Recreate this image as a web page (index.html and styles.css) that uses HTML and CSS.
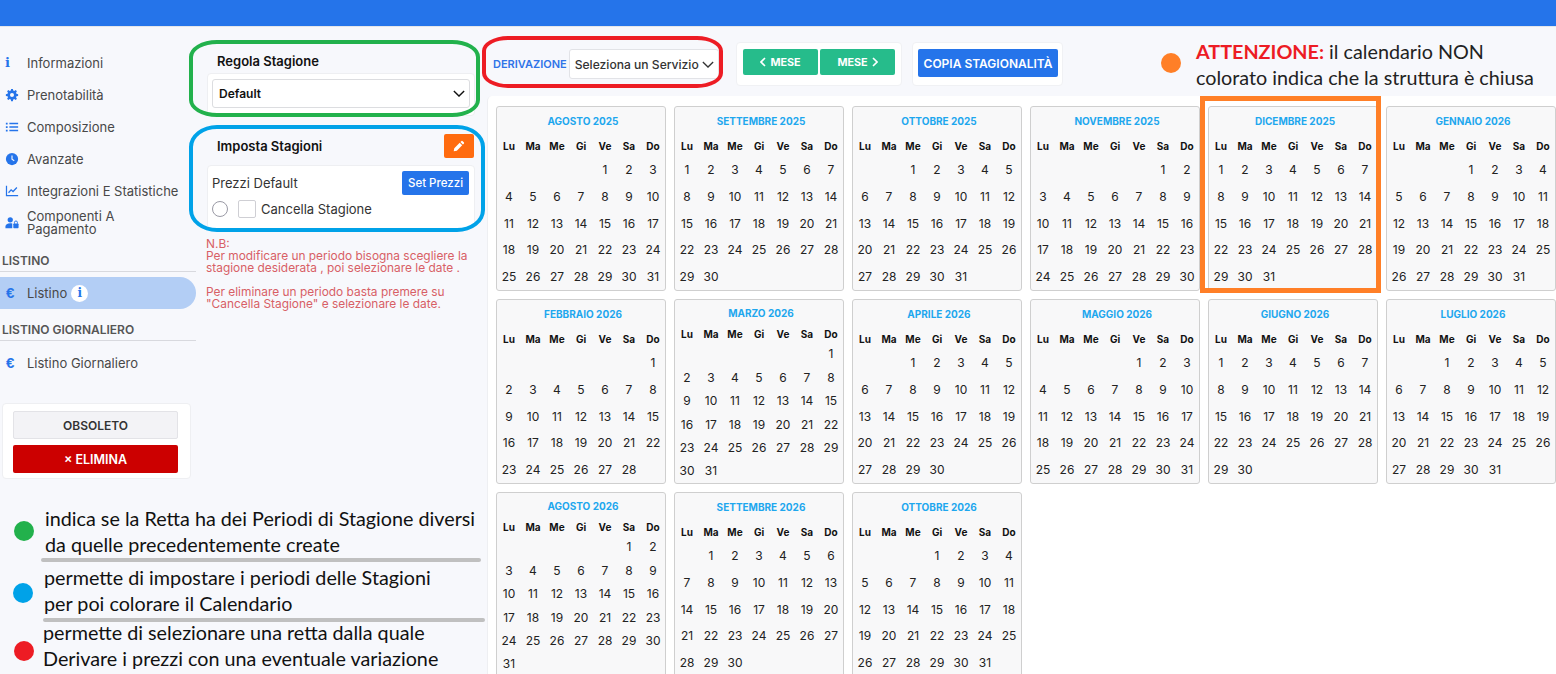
FILE: index.html
```html
<!DOCTYPE html>
<html lang="it">
<head>
<meta charset="utf-8">
<title>Listino</title>
<link rel="stylesheet" href="styles.css">
</head>
<body>
<header class="topbar"></header>
<div class="app">
  <nav class="sidebar">
    <a class="nav-item"><span class="ico ico-i">i</span><span>Informazioni</span></a>
    <a class="nav-item"><svg class="ico" viewBox="0 0 16 16"><path fill="#2574ea" d="M7 1h2l.4 1.8 1.2.5 1.6-1 1.4 1.4-1 1.6.5 1.2L15 7v2l-1.9.4-.5 1.2 1 1.6-1.4 1.4-1.6-1-1.2.5L9 15H7l-.4-1.9-1.2-.5-1.6 1-1.4-1.4 1-1.6-.5-1.2L1 9V7l1.9-.4.5-1.2-1-1.6 1.4-1.4 1.6 1 1.2-.5zM8 5.7a2.3 2.3 0 1 0 0 4.6 2.3 2.3 0 0 0 0-4.6z"/></svg><span>Prenotabilità</span></a>
    <a class="nav-item"><svg class="ico" viewBox="0 0 16 16"><path fill="#2574ea" d="M1 3h2v2H1zM1 7h2v2H1zM1 11h2v2H1zM5 3.2h10v1.6H5zM5 7.2h10v1.6H5zM5 11.2h10v1.6H5z"/></svg><span>Composizione</span></a>
    <a class="nav-item"><svg class="ico" viewBox="0 0 16 16"><circle cx="8" cy="8" r="7" fill="#2574ea"/><path d="M8 4v4.3l2.6 1.6" fill="none" stroke="#f7f8fc" stroke-width="1.3"/></svg><span>Avanzate</span></a>
    <a class="nav-item"><svg class="ico" viewBox="0 0 16 16"><path fill="none" stroke="#2574ea" stroke-width="1.4" d="M1.7 2v11.3H15"/><path fill="none" stroke="#2574ea" stroke-width="1.4" d="M4 10l3-3.4 2.2 2L13.6 4"/></svg><span>Integrazioni E Statistiche</span></a>
    <a class="nav-item"><svg class="ico" viewBox="0 0 16 16"><circle cx="6" cy="4.4" r="3" fill="#2574ea"/><path fill="#2574ea" d="M0.5 14v-2c0-2.300 2-3.800 5.500-3.800 1 0 1.700.1 2.300.3V14z"/><rect x="9.500" y="8.500" width="6" height="5.500" rx=".8" fill="#2574ea"/><path d="M10.800 8.800V7.400a1.700 1.700 0 0 1 3.400 0v1.400" fill="none" stroke="#2574ea" stroke-width="1.100"/></svg><span class="nav-wrap">Componenti A Pagamento</span></a>
    <h3 class="nav-title">LISTINO</h3>
    <a class="nav-item active"><span class="ico ico-e">€</span><span>Listino</span><span class="info-badge">i</span></a>
    <h3 class="nav-title second">LISTINO GIORNALIERO</h3>
    <a class="nav-item"><span class="ico ico-e">€</span><span>Listino Giornaliero</span></a>
    <div class="danger-card">
      <button class="btn-obsolete">OBSOLETO</button>
      <button class="btn-delete">× ELIMINA</button>
    </div>
  </nav>

  <aside class="rules">
    <h4 class="rule-title">Regola Stagione</h4>
    <div class="card rule-card">
      <div class="select-default">Default<svg class="chev" viewBox="0 0 14 8"><path d="M1 1l6 6 6-6" fill="none" stroke="#111" stroke-width="1.600"/></svg></div>
    </div>
    <div class="rule-head">
      <h4 class="rule-title">Imposta Stagioni</h4>
      <button class="btn-edit"><svg viewBox="0 0 12 12"><path fill="#fff" d="M8.300 1.200a1 1 0 0 1 1.400 0l1.100 1.100a1 1 0 0 1 0 1.400l-.9.900-2.500-2.500zM6.700 2.800l2.500 2.500-5.400 5.400-3.100.6.600-3.100z"/></svg></button>
    </div>
    <div class="card season-card">
      <div class="season-row">
        <span>Prezzi Default</span>
        <button class="btn-set">Set Prezzi</button>
      </div>
      <div class="season-row2">
        <span class="radio"></span>
        <span class="check"></span>
        <span>Cancella Stagione</span>
      </div>
    </div>
    <p class="note">N.B:<br>Per modificare un periodo bisogna scegliere la stagione desiderata , poi selezionare le date .<br><br>Per eliminare un periodo basta premere su "Cancella Stagione" e selezionare le date.</p>
  </aside>

  <main class="main">
    <div class="toolbar">
      <div class="tool derive">
        <span class="derive-label">DERIVAZIONE</span>
        <div class="select-service">Seleziona un Servizio<svg class="chev small" viewBox="0 0 14 8"><path d="M1 1l6 6 6-6" fill="none" stroke="#333" stroke-width="1.500"/></svg></div>
      </div>
      <div class="tool nav-tool">
        <button class="btn-month"><svg class="arrow" viewBox="0 0 6 10"><path d="M5 1L1 5l4 4" fill="none" stroke="#fff" stroke-width="1.600"/></svg>MESE</button>
        <button class="btn-month">MESE<svg class="arrow" viewBox="0 0 6 10"><path d="M1 1l4 4-4 4" fill="none" stroke="#fff" stroke-width="1.600"/></svg></button>
      </div>
      <div class="tool copy-tool">
        <button class="btn-copy">COPIA STAGIONALITÀ</button>
      </div>
    </div>
    <section class="panel">
      <div class="months">
        <article class="month"><h5>AGOSTO 2025</h5><div class="days"><b>Lu</b><b>Ma</b><b>Me</b><b>Gi</b><b>Ve</b><b>Sa</b><b>Do</b><span class="s5">1</span><span>2</span><span>3</span><span>4</span><span>5</span><span>6</span><span>7</span><span>8</span><span>9</span><span>10</span><span>11</span><span>12</span><span>13</span><span>14</span><span>15</span><span>16</span><span>17</span><span>18</span><span>19</span><span>20</span><span>21</span><span>22</span><span>23</span><span>24</span><span>25</span><span>26</span><span>27</span><span>28</span><span>29</span><span>30</span><span>31</span></div></article>
        <article class="month"><h5>SETTEMBRE 2025</h5><div class="days"><b>Lu</b><b>Ma</b><b>Me</b><b>Gi</b><b>Ve</b><b>Sa</b><b>Do</b><span>1</span><span>2</span><span>3</span><span>4</span><span>5</span><span>6</span><span>7</span><span>8</span><span>9</span><span>10</span><span>11</span><span>12</span><span>13</span><span>14</span><span>15</span><span>16</span><span>17</span><span>18</span><span>19</span><span>20</span><span>21</span><span>22</span><span>23</span><span>24</span><span>25</span><span>26</span><span>27</span><span>28</span><span>29</span><span>30</span></div></article>
        <article class="month"><h5>OTTOBRE 2025</h5><div class="days"><b>Lu</b><b>Ma</b><b>Me</b><b>Gi</b><b>Ve</b><b>Sa</b><b>Do</b><span class="s3">1</span><span>2</span><span>3</span><span>4</span><span>5</span><span>6</span><span>7</span><span>8</span><span>9</span><span>10</span><span>11</span><span>12</span><span>13</span><span>14</span><span>15</span><span>16</span><span>17</span><span>18</span><span>19</span><span>20</span><span>21</span><span>22</span><span>23</span><span>24</span><span>25</span><span>26</span><span>27</span><span>28</span><span>29</span><span>30</span><span>31</span></div></article>
        <article class="month"><h5>NOVEMBRE 2025</h5><div class="days"><b>Lu</b><b>Ma</b><b>Me</b><b>Gi</b><b>Ve</b><b>Sa</b><b>Do</b><span class="s6">1</span><span>2</span><span>3</span><span>4</span><span>5</span><span>6</span><span>7</span><span>8</span><span>9</span><span>10</span><span>11</span><span>12</span><span>13</span><span>14</span><span>15</span><span>16</span><span>17</span><span>18</span><span>19</span><span>20</span><span>21</span><span>22</span><span>23</span><span>24</span><span>25</span><span>26</span><span>27</span><span>28</span><span>29</span><span>30</span></div></article>
        <article class="month"><h5>DICEMBRE 2025</h5><div class="days"><b>Lu</b><b>Ma</b><b>Me</b><b>Gi</b><b>Ve</b><b>Sa</b><b>Do</b><span>1</span><span>2</span><span>3</span><span>4</span><span>5</span><span>6</span><span>7</span><span>8</span><span>9</span><span>10</span><span>11</span><span>12</span><span>13</span><span>14</span><span>15</span><span>16</span><span>17</span><span>18</span><span>19</span><span>20</span><span>21</span><span>22</span><span>23</span><span>24</span><span>25</span><span>26</span><span>27</span><span>28</span><span>29</span><span>30</span><span>31</span></div></article>
        <article class="month"><h5>GENNAIO 2026</h5><div class="days"><b>Lu</b><b>Ma</b><b>Me</b><b>Gi</b><b>Ve</b><b>Sa</b><b>Do</b><span class="s4">1</span><span>2</span><span>3</span><span>4</span><span>5</span><span>6</span><span>7</span><span>8</span><span>9</span><span>10</span><span>11</span><span>12</span><span>13</span><span>14</span><span>15</span><span>16</span><span>17</span><span>18</span><span>19</span><span>20</span><span>21</span><span>22</span><span>23</span><span>24</span><span>25</span><span>26</span><span>27</span><span>28</span><span>29</span><span>30</span><span>31</span></div></article>
        <article class="month"><h5>FEBBRAIO 2026</h5><div class="days"><b>Lu</b><b>Ma</b><b>Me</b><b>Gi</b><b>Ve</b><b>Sa</b><b>Do</b><span class="s7">1</span><span>2</span><span>3</span><span>4</span><span>5</span><span>6</span><span>7</span><span>8</span><span>9</span><span>10</span><span>11</span><span>12</span><span>13</span><span>14</span><span>15</span><span>16</span><span>17</span><span>18</span><span>19</span><span>20</span><span>21</span><span>22</span><span>23</span><span>24</span><span>25</span><span>26</span><span>27</span><span>28</span></div></article>
        <article class="month six"><h5>MARZO 2026</h5><div class="days"><b>Lu</b><b>Ma</b><b>Me</b><b>Gi</b><b>Ve</b><b>Sa</b><b>Do</b><span class="s7">1</span><span>2</span><span>3</span><span>4</span><span>5</span><span>6</span><span>7</span><span>8</span><span>9</span><span>10</span><span>11</span><span>12</span><span>13</span><span>14</span><span>15</span><span>16</span><span>17</span><span>18</span><span>19</span><span>20</span><span>21</span><span>22</span><span>23</span><span>24</span><span>25</span><span>26</span><span>27</span><span>28</span><span>29</span><span>30</span><span>31</span></div></article>
        <article class="month"><h5>APRILE 2026</h5><div class="days"><b>Lu</b><b>Ma</b><b>Me</b><b>Gi</b><b>Ve</b><b>Sa</b><b>Do</b><span class="s3">1</span><span>2</span><span>3</span><span>4</span><span>5</span><span>6</span><span>7</span><span>8</span><span>9</span><span>10</span><span>11</span><span>12</span><span>13</span><span>14</span><span>15</span><span>16</span><span>17</span><span>18</span><span>19</span><span>20</span><span>21</span><span>22</span><span>23</span><span>24</span><span>25</span><span>26</span><span>27</span><span>28</span><span>29</span><span>30</span></div></article>
        <article class="month"><h5>MAGGIO 2026</h5><div class="days"><b>Lu</b><b>Ma</b><b>Me</b><b>Gi</b><b>Ve</b><b>Sa</b><b>Do</b><span class="s5">1</span><span>2</span><span>3</span><span>4</span><span>5</span><span>6</span><span>7</span><span>8</span><span>9</span><span>10</span><span>11</span><span>12</span><span>13</span><span>14</span><span>15</span><span>16</span><span>17</span><span>18</span><span>19</span><span>20</span><span>21</span><span>22</span><span>23</span><span>24</span><span>25</span><span>26</span><span>27</span><span>28</span><span>29</span><span>30</span><span>31</span></div></article>
        <article class="month"><h5>GIUGNO 2026</h5><div class="days"><b>Lu</b><b>Ma</b><b>Me</b><b>Gi</b><b>Ve</b><b>Sa</b><b>Do</b><span>1</span><span>2</span><span>3</span><span>4</span><span>5</span><span>6</span><span>7</span><span>8</span><span>9</span><span>10</span><span>11</span><span>12</span><span>13</span><span>14</span><span>15</span><span>16</span><span>17</span><span>18</span><span>19</span><span>20</span><span>21</span><span>22</span><span>23</span><span>24</span><span>25</span><span>26</span><span>27</span><span>28</span><span>29</span><span>30</span></div></article>
        <article class="month"><h5>LUGLIO 2026</h5><div class="days"><b>Lu</b><b>Ma</b><b>Me</b><b>Gi</b><b>Ve</b><b>Sa</b><b>Do</b><span class="s3">1</span><span>2</span><span>3</span><span>4</span><span>5</span><span>6</span><span>7</span><span>8</span><span>9</span><span>10</span><span>11</span><span>12</span><span>13</span><span>14</span><span>15</span><span>16</span><span>17</span><span>18</span><span>19</span><span>20</span><span>21</span><span>22</span><span>23</span><span>24</span><span>25</span><span>26</span><span>27</span><span>28</span><span>29</span><span>30</span><span>31</span></div></article>
        <article class="month six"><h5>AGOSTO 2026</h5><div class="days"><b>Lu</b><b>Ma</b><b>Me</b><b>Gi</b><b>Ve</b><b>Sa</b><b>Do</b><span class="s6">1</span><span>2</span><span>3</span><span>4</span><span>5</span><span>6</span><span>7</span><span>8</span><span>9</span><span>10</span><span>11</span><span>12</span><span>13</span><span>14</span><span>15</span><span>16</span><span>17</span><span>18</span><span>19</span><span>20</span><span>21</span><span>22</span><span>23</span><span>24</span><span>25</span><span>26</span><span>27</span><span>28</span><span>29</span><span>30</span><span>31</span></div></article>
        <article class="month"><h5>SETTEMBRE 2026</h5><div class="days"><b>Lu</b><b>Ma</b><b>Me</b><b>Gi</b><b>Ve</b><b>Sa</b><b>Do</b><span class="s2">1</span><span>2</span><span>3</span><span>4</span><span>5</span><span>6</span><span>7</span><span>8</span><span>9</span><span>10</span><span>11</span><span>12</span><span>13</span><span>14</span><span>15</span><span>16</span><span>17</span><span>18</span><span>19</span><span>20</span><span>21</span><span>22</span><span>23</span><span>24</span><span>25</span><span>26</span><span>27</span><span>28</span><span>29</span><span>30</span></div></article>
        <article class="month"><h5>OTTOBRE 2026</h5><div class="days"><b>Lu</b><b>Ma</b><b>Me</b><b>Gi</b><b>Ve</b><b>Sa</b><b>Do</b><span class="s4">1</span><span>2</span><span>3</span><span>4</span><span>5</span><span>6</span><span>7</span><span>8</span><span>9</span><span>10</span><span>11</span><span>12</span><span>13</span><span>14</span><span>15</span><span>16</span><span>17</span><span>18</span><span>19</span><span>20</span><span>21</span><span>22</span><span>23</span><span>24</span><span>25</span><span>26</span><span>27</span><span>28</span><span>29</span><span>30</span><span>31</span></div></article>
      </div>
    </section>
  </main>
</div>

<!-- Annotations drawn over the screenshot -->
<div class="ann ring ring-green"></div>
<div class="ann ring ring-blue"></div>
<div class="ann ring ring-red"></div>
<div class="ann box-orange"></div>
<span class="ann dot dot-orange"></span>
<div class="ann attention">
  <p><strong>ATTENZIONE:</strong> il calendario NON<br>colorato indica che la struttura è chiusa</p>
</div>
<div class="ann legend l1"><span class="dot dot-green"></span><p>indica se la Retta ha dei Periodi di Stagione diversi<br>da quelle precedentemente create</p></div>
<div class="ann rule r1"></div>
<div class="ann legend l2"><span class="dot dot-blue"></span><p>permette di impostare i periodi delle Stagioni<br>per poi colorare il Calendario</p></div>
<div class="ann rule r2"></div>
<div class="ann legend l3"><span class="dot dot-red"></span><p>permette di selezionare una retta dalla quale<br>Derivare i prezzi con una eventuale variazione</p></div>
</body>
</html>
```
FILE: styles.css
```css
* { box-sizing: border-box; }
html, body { margin: 0; height: 674px; overflow: hidden; }
body { background: #f7f8fc; font-family: Inter, "Liberation Sans", sans-serif; color: #333; position: relative; }
h3, h4, h5, p { margin: 0; }
button { font-family: inherit; border: 0; cursor: pointer; padding: 0; }

.topbar { height: 27px; background: #2574ea; border-bottom: 1px solid #e4e6ea; }
.app { display: flex; height: 647px; }

/* Sidebar */
.sidebar { width: 196px; flex: none; padding-top: 20px; font-size: 13px; color: #484848; }
.nav-item { display: flex; align-items: center; height: 32px; line-height: 13px; }
.nav-wrap { max-width: 110px; }
.ico { width: 14px; height: 14px; margin-left: 5px; margin-right: 8px; flex: none; text-align: center; color: #2574ea; }
.ico-i { font: 700 13px/14px "DejaVu Serif", serif; text-align: left; }
.ico-e { font: 700 15px/14px "Liberation Sans", sans-serif; text-align: left; margin-left: 6px; margin-right: 7px; }
.nav-title { font-size: 12px; font-weight: 600; color: #555; height: 22px; margin-top: 11px; padding-left: 2px; line-height: 21px; border-bottom: 1px solid #d8d9de; margin-bottom: 5px; }
.nav-title.second { margin-top: 10px; margin-bottom: 6px; }
.active { background: #b3cef5; border-radius: 0 16px 16px 0; }
.info-badge { width: 17px; height: 17px; margin-left: 4px; border-radius: 50%; background: #fff; color: #2574ea; text-align: center; font: 700 12px/17px "DejaVu Serif", serif; }
.danger-card { width: 189px; height: 76px; margin: 24px 0 0 2px; padding: 7px 12px 0 10px; background: #fff; border: 1px solid #eeeff2; border-radius: 4px; display: flex; flex-direction: column; gap: 6px; }
.btn-obsolete, .btn-delete { height: 28px; font-size: 12px; font-weight: 600; border-radius: 2px; flex: none; }
.btn-obsolete { background: #f3f3f6; color: #333; border: 1px solid #e3e3e7; }
.btn-delete { background: #cc0000; color: #fff; font-size: 12.500px; }

/* Rules column */
.rules { width: 270px; flex: none; margin-left: 10px; padding-top: 26px; }
.rule-title { font-size: 13px; font-weight: 600; color: #111; padding-left: 11px; line-height: 16px; }
.card { background: #fff; border: 1px solid #eeeff2; border-radius: 4px; margin-left: 1px; width: 268px; }
.rule-card { margin-top: 4px; padding: 5px 4px; height: 43px; }
.select-default { height: 29px; border: 1px solid #dcdde0; border-radius: 3px; background: #fff; display: flex; align-items: center; justify-content: space-between; padding: 0 4px 0 6px; font-size: 12px; font-weight: 600; color: #111; }
.chev { width: 12px; height: 7px; }
.chev.small { width: 12px; margin-left: 3px; }
.rule-head { display: flex; justify-content: space-between; align-items: center; margin-top: 17px; height: 26px; padding-right: 2px; }
.btn-edit { width: 30px; height: 24px; background: #ff6b0f; border-radius: 2px; display: flex; align-items: center; justify-content: center; }
.btn-edit svg { width: 12px; height: 12px; }
.season-card { margin-top: 6px; height: 64px; padding: 5px 5px 0 4px; font-size: 13px; color: #333; }
.season-row { display: flex; justify-content: space-between; align-items: center; height: 24px; }
.btn-set { width: 67px; height: 24px; background: #2574ea; color: #fff; border-radius: 2px; font-size: 11.500px; font-weight: 500; }
.season-row2 { display: flex; align-items: center; margin-top: 2px; height: 24px; }
.radio { width: 16px; height: 16px; border: 1px solid #9a9aa5; border-radius: 50%; background: #fff; }
.check { width: 18px; height: 18px; border: 1px solid #cfcfd4; border-radius: 2px; background: #fff; margin-left: 10px; margin-right: 5px; }
.note { margin-top: 9px; font-size: 11.900px; line-height: 12px; color: #d85f66; }

/* Main */
.main { margin-left: 11px; flex: 1; min-width: 0; display: flex; flex-direction: column; }
.toolbar { height: 69px; flex: none; display: flex; align-items: flex-start; padding-top: 15px; gap: 9px; }
.tool { height: 44px; background: #fff; border: 1px solid #f0f1f4; border-radius: 4px; display: flex; align-items: flex-start; padding-top: 6px; }
.derive { width: 240px; padding-left: 6px; background: transparent; border: 0; gap: 2px; }
.derive-label { font-size: 11px; font-weight: 600; color: #2f74e8; line-height: 30px; margin-top: 1px; }
.select-service { width: 150px; height: 30px; margin-top: 1px; background: #fff; border: 1px solid #e2e3e7; border-radius: 3px; display: flex; align-items: center; padding-left: 5px; font-size: 12.100px; font-weight: 500; color: #333; white-space: nowrap; }
.nav-tool { width: 166px; padding-left: 6px; gap: 2px; }
.btn-month { width: 75px; height: 26px; background: #26bc8b; color: #fff; font-size: 10.800px; font-weight: 700; border-radius: 2px; display: flex; align-items: center; justify-content: center; gap: 4px; }
.arrow { width: 6px; height: 10px; }
.copy-tool { width: 151px; padding-left: 5px; margin-left: 1px; }
.btn-copy { width: 140px; height: 28px; background: #2574ea; color: #fff; font-size: 12px; font-weight: 600; border-radius: 2px; white-space: nowrap; }
.panel { flex: 1; background: #fff; border-left: 1px solid #eeeff2; border-top-left-radius: 5px; padding: 10px 0 0 8px; overflow: hidden; }
.months { display: grid; grid-template-columns: repeat(6, 170px); gap: 8px; }
.month { height: 185px; background: #f8f8f9; border: 1px solid #cfcfcf; border-radius: 3px; display: flex; flex-direction: column; }
.month h5 { font-size: 10px; font-weight: 700; color: #1ea7ee; text-align: center; line-height: 14px; margin-top: 7px; height: 21px; padding-left: 4px; flex: none; }
.days { display: grid; grid-template-columns: repeat(7, 24px); grid-template-rows: 21.400px repeat(5, 26.700px); align-items: center; justify-items: center; font-size: 12px; color: #222; }
.days b { font-size: 10px; font-weight: 700; color: #111; }
.month.six h5 { margin-top: 6px; height: 19.700px; }
.month.six .days { grid-template-rows: 16.600px repeat(6, 23.400px); }
.s2 { grid-column-start: 2; }
.s3 { grid-column-start: 3; }
.s4 { grid-column-start: 4; }
.s5 { grid-column-start: 5; }
.s6 { grid-column-start: 6; }
.s7 { grid-column-start: 7; }

/* Annotations over the page */
.ann { position: absolute; }
.ring { border-style: solid; }
.ring-green { left: 189px; top: 40px; width: 291px; height: 77px; border-width: 4px; border-color: #22b14c; border-radius: 28px / 17px; }
.ring-blue { left: 189px; top: 125px; width: 296px; height: 107px; border-width: 4px; border-color: #00a2e8; border-radius: 28px / 22px; }
.ring-red { left: 482px; top: 36px; width: 241px; height: 52px; border-width: 4px; border-color: #ed1c24; border-radius: 26px / 15px; }
.box-orange { left: 1200px; top: 96px; width: 181px; height: 197px; border: 5px solid #ff7f27; }
.dot { position: absolute; width: 20px; height: 20px; border-radius: 50%; }
.dot-orange { background: #ff7f27; left: 1161px; top: 53px; }
.dot-green { background: #22b14c; }
.dot-blue { background: #00a2e8; }
.dot-red { background: #ed1c24; }
.attention { left: 1196px; top: 39px; font: 19.750px/26px Lato, "Open Sans", sans-serif; color: #222; white-space: nowrap; }
.attention strong { color: #ed1c24; font-weight: 700; }
.legend { font: 19.750px/26.300px Lato, "Open Sans", sans-serif; color: #111; white-space: nowrap; }
.l1 { left: 45px; top: 506px; }
.l1 .dot { left: -31px; top: 15px; }
.l2 { left: 44px; top: 565px; }
.l2 .dot { left: -31px; top: 18px; }
.l3 { left: 43px; top: 620px; }
.l3 .dot { left: -29px; top: 21px; }
.rule { height: 4px; background: #c0c0c0; border-radius: 2px; }
.r1 { left: 41px; top: 558px; width: 440px; }
.r2 { left: 43px; top: 618px; width: 442px; }
```
